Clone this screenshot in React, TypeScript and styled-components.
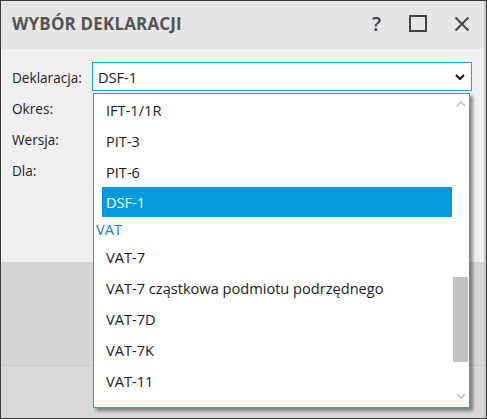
import React from 'react';
import styled, { createGlobalStyle } from 'styled-components';

const GlobalStyle = createGlobalStyle`
  html, body {
    margin: 0;
    padding: 0;
    background: #ffffff;
  }
  body {
    font-family: 'Open Sans', 'Noto Sans', sans-serif;
  }
`;

interface ListEntry {
  label: string;
  kind: 'item' | 'group';
  selected?: boolean;
}

const entries: ListEntry[] = [
  { label: 'IFT-1/1R', kind: 'item' },
  { label: 'PIT-3', kind: 'item' },
  { label: 'PIT-6', kind: 'item' },
  { label: 'DSF-1', kind: 'item', selected: true },
  { label: 'VAT', kind: 'group' },
  { label: 'VAT-7', kind: 'item' },
  { label: 'VAT-7 cząstkowa podmiotu podrzędnego', kind: 'item' },
  { label: 'VAT-7D', kind: 'item' },
  { label: 'VAT-7K', kind: 'item' },
  { label: 'VAT-11', kind: 'item' },
];

const Window = styled.div`
  width: 487px;
  height: 419px;
  box-sizing: border-box;
  border: 1px solid #3a3a3a;
  display: flex;
  flex-direction: column;
  overflow: hidden;
  position: relative;
  &::after {
    content: '';
    position: absolute;
    top: 0;
    right: 0;
    bottom: 0;
    width: 2px;
    background: #c9c9c9;
  }
`;

const TitleBar = styled.div`
  height: 48px;
  flex: none;
  background: #e6e6e6;
  display: flex;
  align-items: center;
  padding: 0 16px 0 11px;
`;

const Title = styled.div`
  flex: 1;
  font-size: 17px;
  font-weight: 700;
  color: #545454;
  letter-spacing: 0.15px;
  margin-top: -3px;
`;

const TitleButtons = styled.div`
  display: flex;
  align-items: center;
  gap: 27px;
  color: #444;
  margin-top: -3px;
`;

const HelpGlyph = styled.span`
  font-size: 20px;
  font-weight: 600;
  line-height: 1;
  color: #444;
  margin-right: 1px;
`;

const Body = styled.div`
  flex: none;
  height: 213px;
  background: #f0f0f0;
  padding: 13px 0 0 11px;
  box-sizing: border-box;
`;

const FormGrid = styled.div`
  display: grid;
  grid-template-columns: 80px 380px;
  grid-auto-rows: 31px;
  align-items: center;
`;

const FieldLabel = styled.div`
  font-size: 13.6px;
  color: #222;
`;

const ComboWrap = styled.div`
  position: relative;
  height: 29px;
  align-self: start;
`;

const Combo = styled.div`
  height: 29px;
  box-sizing: border-box;
  border: 1px solid #1e9fe6;
  background: #ffffff;
  display: flex;
  align-items: center;
  padding: 0 6px 0 5px;
  font-size: 14.6px;
  color: #1a1a1a;
`;

const ComboValue = styled.span`
  flex: 1;
`;

const Dropdown = styled.div`
  position: absolute;
  top: 31px;
  left: 1px;
  width: 377px;
  height: 315px;
  box-sizing: border-box;
  border: 1px solid #1e9fe6;
  background: #ffffff;
  box-shadow: 3px 3px 3px rgba(0, 0, 0, 0.4);
  z-index: 5;
`;

const ListBody = styled.div`
  width: 358px;
  display: flex;
  flex-direction: column;
`;

const Item = styled.div<{ $selected?: boolean }>`
  height: 31px;
  margin-left: 8px;
  padding-left: 4px;
  display: flex;
  align-items: center;
  font-size: 14.6px;
  color: ${props => (props.$selected ? '#ffffff' : '#1c1c1c')};
  background: ${props => (props.$selected ? '#0399dd' : 'transparent')};
  white-space: nowrap;
`;

const SelectedItem = styled(Item)`
  height: 30px;
`;

const GroupHeader = styled.div`
  height: 24px;
  padding-left: 2px;
  display: flex;
  align-items: center;
  font-size: 14.6px;
  color: #1a7cc6;
`;

const ScrollTrack = styled.div`
  position: absolute;
  top: 0;
  right: 0;
  bottom: 0;
  width: 16px;
`;

const ScrollArrow = styled.div<{ $bottom?: boolean }>`
  position: absolute;
  left: 3px;
  ${props => (props.$bottom ? 'bottom: 8px;' : 'top: 7px;')}
  width: 10px;
  height: 6px;
  display: flex;
`;

const ScrollThumb = styled.div`
  position: absolute;
  top: 183px;
  left: 0;
  width: 15px;
  height: 85px;
  background: #c2c2c2;
`;

const LowerArea = styled.div`
  flex: 1;
  background: #d5d5d5;
  display: flex;
  flex-direction: column;
`;

const LowerFill = styled.div`
  height: 103px;
  border-bottom: 1px solid #cacaca;
`;

const LowerFooter = styled.div`
  flex: 1;
  background: #d8d8d8;
`;

const Chevron: React.FC<{ up?: boolean; color: string; w: number; h: number; stroke: number }> = ({
  up,
  color,
  w,
  h,
  stroke,
}) => (
  <svg width={w} height={h} viewBox={`0 0 ${w} ${h}`}>
    <polyline
      points={up ? `1,${h - 1} ${w / 2},1 ${w - 1},${h - 1}` : `1,1 ${w / 2},${h - 1} ${w - 1},1`}
      fill="none"
      stroke={color}
      strokeWidth={stroke}
    />
  </svg>
);

const App: React.FC = () => {
  return (
    <>
      <GlobalStyle />
      <Window>
        <TitleBar>
          <Title>WYBÓR DEKLARACJI</Title>
          <TitleButtons>
            <HelpGlyph>?</HelpGlyph>
            <svg width="18" height="17" viewBox="0 0 18 17">
              <rect x="1" y="1" width="16" height="15" fill="none" stroke="#444" strokeWidth="2" />
            </svg>
            <svg width="16" height="16" viewBox="0 0 16 16">
              <path d="M1.5 1.5 L14.5 14.5 M14.5 1.5 L1.5 14.5" stroke="#444" strokeWidth="2" fill="none" />
            </svg>
          </TitleButtons>
        </TitleBar>
        <Body>
          <FormGrid>
            <FieldLabel>Deklaracja:</FieldLabel>
            <ComboWrap>
              <Combo>
                <ComboValue>DSF-1</ComboValue>
                <Chevron color="#111" w={10} h={6} stroke={2} />
              </Combo>
              <Dropdown>
                <ListBody>
                  {entries.map(entry => {
                    if (entry.kind === 'group') {
                      return <GroupHeader key={entry.label}>{entry.label}</GroupHeader>;
                    }
                    if (entry.selected) {
                      return (
                        <SelectedItem key={entry.label} $selected>
                          {entry.label}
                        </SelectedItem>
                      );
                    }
                    return <Item key={entry.label}>{entry.label}</Item>;
                  })}
                </ListBody>
                <ScrollTrack>
                  <ScrollArrow>
                    <Chevron up color="#bdbdbd" w={10} h={6} stroke={1.5} />
                  </ScrollArrow>
                  <ScrollThumb />
                  <ScrollArrow $bottom>
                    <Chevron color="#bdbdbd" w={10} h={6} stroke={1.5} />
                  </ScrollArrow>
                </ScrollTrack>
              </Dropdown>
            </ComboWrap>
            <FieldLabel>Okres:</FieldLabel>
            <div />
            <FieldLabel>Wersja:</FieldLabel>
            <div />
            <FieldLabel>Dla:</FieldLabel>
            <div />
          </FormGrid>
        </Body>
        <LowerArea>
          <LowerFill />
          <LowerFooter />
        </LowerArea>
      </Window>
    </>
  );
};

export default App;
